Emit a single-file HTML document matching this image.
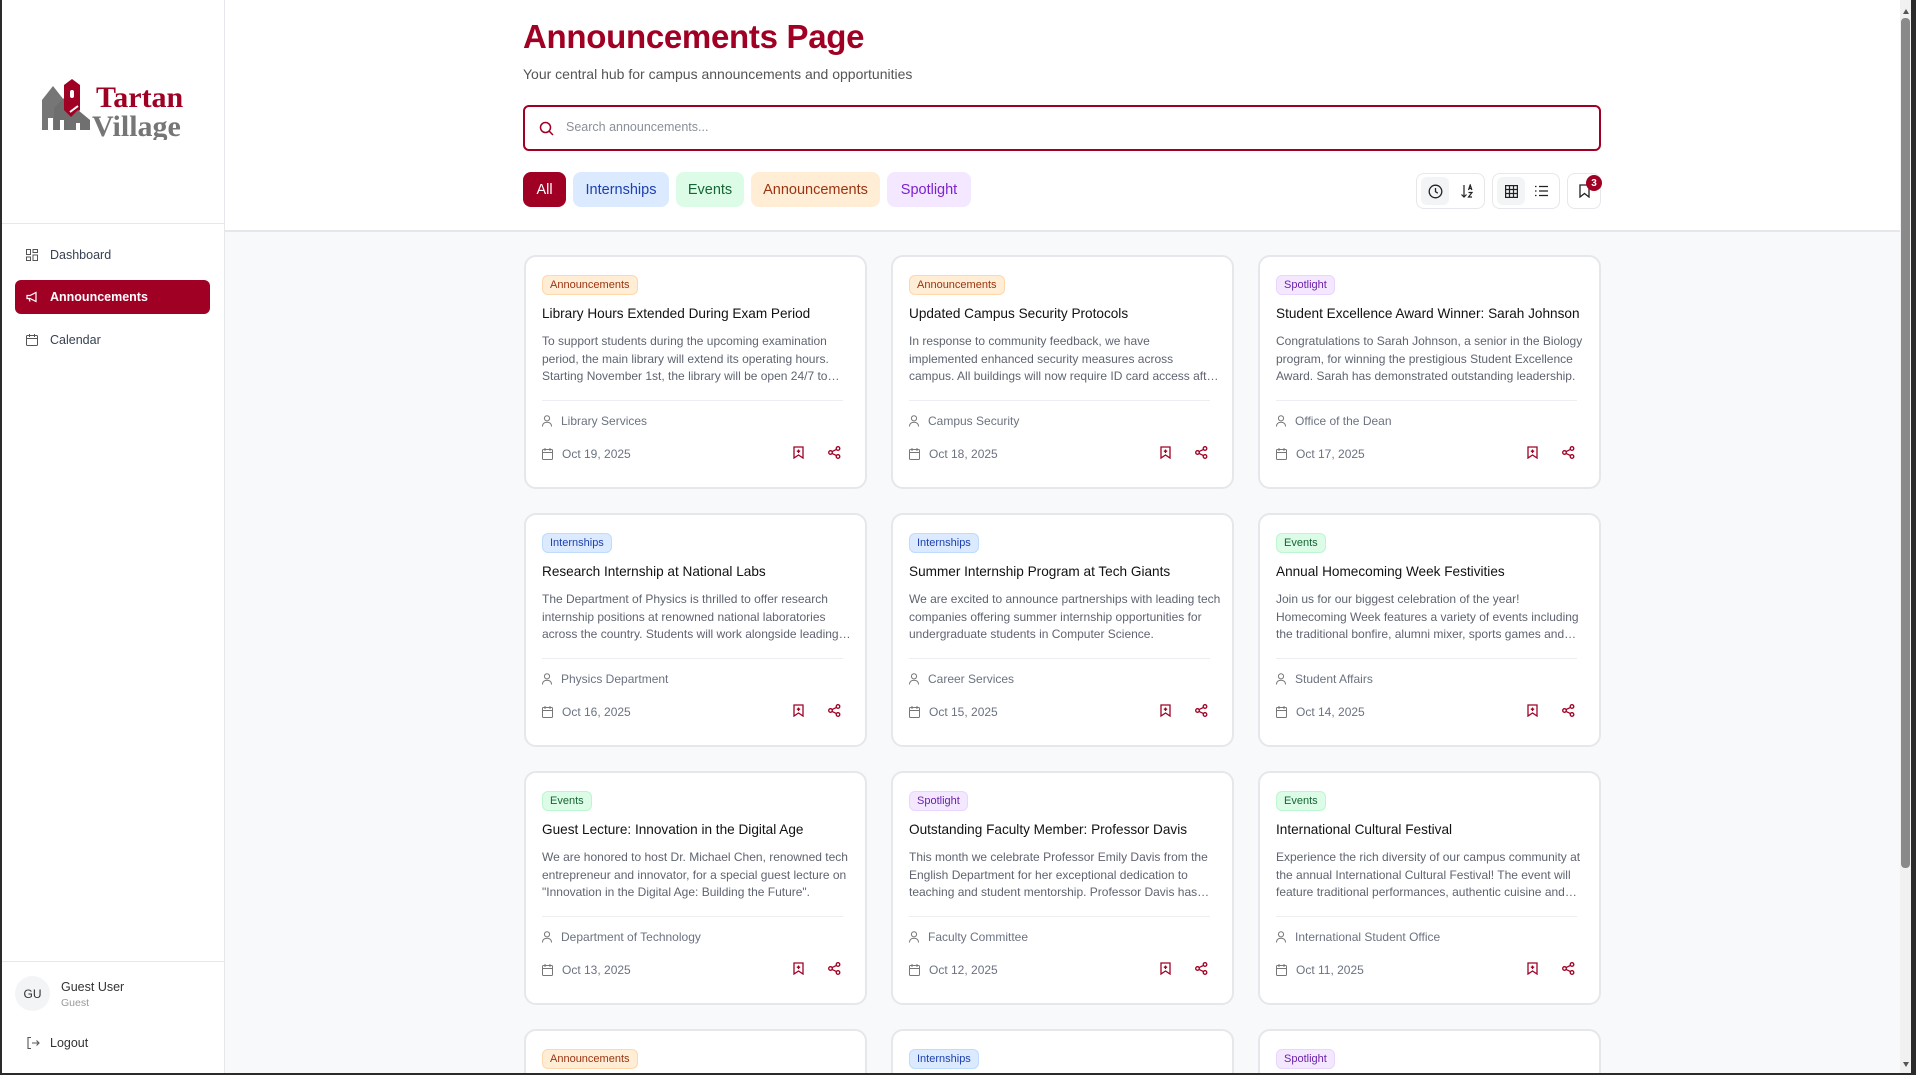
<!DOCTYPE html>
<html><head><meta charset="utf-8"><style>
*{box-sizing:border-box;margin:0;padding:0}
html,body{width:1916px;height:1075px;overflow:hidden}
body{font-family:"Liberation Sans",sans-serif;background:#f8f9fb}
#root{position:relative;width:1916px;height:1075px;overflow:hidden;background:#f8f9fb}
.sb{position:absolute;left:0;top:0;width:225px;height:1075px;background:#fff;border-right:1px solid #e5e7eb}
.main-h{position:absolute;left:225px;top:0;width:1675px;height:232px;background:#fff;border-bottom:2px solid #e5e7eb}
.nav{position:absolute;left:15px;width:195px;height:34px;border-radius:6px;font-size:12.5px;color:#374151;display:flex;align-items:center;padding-left:11px}
.nav svg{margin-right:12px}
.nav.act{background:#a00023;color:#fff;font-weight:bold}
h1{position:absolute;left:523px;top:18px;font-size:33px;font-weight:bold;color:#a00023;letter-spacing:-0.3px}
.sub{position:absolute;left:523px;top:66px;font-size:14px;color:#555}
.search{position:absolute;left:523px;top:105px;width:1078px;height:46px;border:2px solid #a00023;border-radius:6px;background:#fff}
.search span{position:absolute;left:41px;top:13px;font-size:12.5px;color:#8a8f99}
.chip{position:absolute;top:172px;height:35px;border-radius:8px;font-size:14.5px;display:flex;align-items:center;justify-content:center}
.grp{position:absolute;top:173px;height:36px;border:1px solid #e5e7eb;border-radius:8px;background:#fff}
.cards{position:absolute;left:524px;top:255px;height:818px;overflow:hidden;display:grid;grid-template-columns:repeat(3,343px);grid-auto-rows:234px;gap:24px}
.card{position:relative;background:#fff;border:2px solid #e5e7eb;border-radius:12px}
.tag{position:absolute;left:16px;top:18px;height:20px;padding:0 7px;border-radius:6px;font-size:11px;display:flex;align-items:center;border:1px solid}
.A{background:#ffedd5;color:#9a3412;border-color:#fed7aa}
.I{background:#dbeafe;color:#1e40af;border-color:#bfdbfe}
.E{background:#dcfce7;color:#166534;border-color:#bbf7d0}
.S{background:#f3e8ff;color:#6b21a8;border-color:#e9d5ff}
.t{position:absolute;left:16px;top:49px;font-size:13.6px;color:#111;white-space:nowrap}
.d{position:absolute;left:16px;top:76px;width:312px;font-size:12px;line-height:17.5px;color:#5f6470;display:-webkit-box;-webkit-line-clamp:3;-webkit-box-orient:vertical;overflow:hidden}
.hr{position:absolute;left:16px;right:22px;top:143px;border-top:1px solid #eceef1}
.m{position:absolute;left:16px;font-size:12px;color:#6b7280;display:flex;align-items:center}
.m svg{margin-right:9px}
.ic{position:absolute;top:189px}
</style></head><body><div id="root">
<div class="sb">
 <svg style="position:absolute;left:40px;top:78px" width="150" height="62" viewBox="0 0 150 62">
  <path d="M2 22 L13 8 L24 22 V52 H2Z" fill="#767676"/>
  <path d="M14 30 L24 20 L34 30 V52 H14Z" fill="#6e6e6e"/>
  <path d="M24 7 L32 1 L40 7 V32 L32 40 L24 32Z" fill="#a00023"/>
  <rect x="30" y="12" width="4" height="8" rx="2" fill="#fff"/>
  <path d="M28 42 L38 32 L50 42 V52 H28Z" fill="#707070"/>
  <path d="M30 34 L38 28" stroke="#fff" stroke-width="2"/>
  <rect x="8" y="40" width="5" height="12" fill="#fff"/><rect x="20" y="42" width="4" height="10" fill="#fff"/><rect x="36" y="45" width="4" height="7" fill="#fff"/>
  <text x="56" y="29" font-family="Liberation Serif,serif" font-weight="bold" font-size="30" fill="#a00023">Tartan</text>
  <text x="52" y="58" font-family="Liberation Serif,serif" font-weight="bold" font-size="30" fill="#767676">Village</text>
 </svg>
 <div style="position:absolute;left:0;top:223px;width:224px;border-top:1px solid #e5e7eb"></div>
 <div class="nav" style="top:238px"><svg width="12" height="12" viewBox="0 0 12 12" fill="none" stroke="#555" stroke-width="1"><rect x=".5" y=".5" width="4" height="5"/><rect x="7" y=".5" width="4.5" height="3"/><rect x="7" y="6" width="4.5" height="5.5"/><rect x=".5" y="8" width="4" height="3.5"/></svg>Dashboard</div>
 <div class="nav act" style="top:280px"><svg width="12" height="12" viewBox="0 0 12 12" fill="none" stroke="#fff" stroke-width="1.2"><path d="M1 4.5h3l6-3v9l-6-3H1z M3 7.5l1 3"/></svg>Announcements</div>
 <div class="nav" style="top:323px"><svg width="12" height="12" viewBox="0 0 12 12" fill="none" stroke="#555" stroke-width="1"><rect x=".5" y="1.5" width="11" height="10" rx="1"/><path d="M.5 4.5h11M3.5 0v3M8.5 0v3"/></svg>Calendar</div>
 <div style="position:absolute;left:0;top:961px;width:224px;border-top:1px solid #e5e7eb"></div>
 <div style="position:absolute;left:15px;top:976px;width:35px;height:35px;border-radius:50%;background:#f3f4f6;font-size:12px;color:#333;display:flex;align-items:center;justify-content:center">GU</div>
 <div style="position:absolute;left:61px;top:980px;font-size:12.5px;color:#333">Guest User</div>
 <div style="position:absolute;left:61px;top:997px;font-size:10.5px;color:#999">Guest</div>
 <svg style="position:absolute;left:27px;top:1037px" width="13" height="12" viewBox="0 0 13 12" fill="none" stroke="#555" stroke-width="1.1"><path d="M4 .5H1v11h3M5 6h7M9.5 3.5 12 6 9.5 8.5"/></svg>
 <div style="position:absolute;left:50px;top:1036px;font-size:12.5px;color:#333">Logout</div>
</div>
<div class="main-h"></div>
<h1>Announcements Page</h1>
<div class="sub">Your central hub for campus announcements and opportunities</div>
<div class="search"><svg style="position:absolute;left:14px;top:14px" width="15" height="15" viewBox="0 0 15 15" fill="none" stroke="#a00023" stroke-width="1.5"><circle cx="6.5" cy="6.5" r="5"/><path d="M10.2 10.2 14 14"/></svg><span>Search announcements...</span></div>
<div class="chip" style="left:523px;width:43px;background:#a00023;color:#fff">All</div>
<div class="chip" style="left:573px;width:96px;background:#dbeafe;color:#1e40af">Internships</div>
<div class="chip" style="left:676px;width:68px;background:#dcfce7;color:#166534">Events</div>
<div class="chip" style="left:751px;width:129px;background:#ffedd5;color:#9a3412">Announcements</div>
<div class="chip" style="left:887px;width:84px;background:#f3e8ff;color:#7e22ce">Spotlight</div>
<div class="grp" style="left:1416px;width:69px"><div style="position:absolute;left:4px;top:3px;width:28px;height:28px;background:#f3f4f6;border-radius:6px"></div>
 <svg style="position:absolute;left:11px;top:10px" width="15" height="15" viewBox="0 0 15 15" fill="none" stroke="#222" stroke-width="1.3"><circle cx="7.5" cy="7.5" r="6.3"/><path d="M7.5 4v3.7l2.3 1.5"/></svg>
 <svg style="position:absolute;left:43px;top:10px" width="14" height="14" viewBox="0 0 14 14" fill="none" stroke="#222" stroke-width="1.2"><path d="M4 1v12M1.5 10.5 4 13l2.5-2.5M8.5 6l1.7-5 1.7 5M9 4.5h2.4M8.5 8.5h3.5l-3.5 4.5h3.5"/></svg></div>
<div class="grp" style="left:1492px;width:68px"><div style="position:absolute;left:4px;top:3px;width:28px;height:28px;background:#f3f4f6;border-radius:6px"></div>
 <svg style="position:absolute;left:12px;top:11px" width="13" height="13" viewBox="0 0 13 13" fill="none" stroke="#222" stroke-width="1.2"><rect x=".6" y=".6" width="11.8" height="11.8"/><path d="M4.5 .6v12M8.5.6v12M.6 4.5h12M.6 8.5h12"/></svg>
 <svg style="position:absolute;left:42px;top:11px" width="13" height="12" viewBox="0 0 13 12" fill="none" stroke="#222" stroke-width="1.2"><path d="M4 1.5h9M4 6h9M4 10.5h9M0 1.5h1.5M0 6h1.5M0 10.5h1.5"/></svg></div>
<div class="grp" style="left:1567px;width:34px"><svg style="position:absolute;left:11px;top:10px" width="11" height="14" viewBox="0 0 11 14" fill="none" stroke="#222" stroke-width="1.3"><path d="M1 1h9v12L5.5 9.5 1 13z"/></svg></div>
<div style="position:absolute;left:1586px;top:175px;width:16px;height:16px;border-radius:50%;background:#a00023;color:#fff;font-size:10px;font-weight:bold;display:flex;align-items:center;justify-content:center">3</div>

<div class="cards" id="cards"></div>

<div style="position:absolute;left:1900px;top:0;width:12px;height:1075px;background:#f1f1f1"></div>
<div style="position:absolute;left:1901px;top:18px;width:9px;height:850px;background:#8a8a8a;border-radius:4px"></div>
<div style="position:absolute;left:1903px;top:6px;width:0;height:0;border:3px solid transparent;border-bottom:5px solid #555"></div>
<div style="position:absolute;left:1903px;top:1062px;width:0;height:0;border:3px solid transparent;border-top:5px solid #555"></div>
<div style="position:absolute;left:1911px;top:0;width:5px;height:1075px;background:#2b2b2b"></div>
<div style="position:absolute;left:0;top:0;width:2px;height:1075px;background:#2b2b2b"></div>
<div style="position:absolute;left:0;top:1073px;width:1916px;height:2px;background:#2b2b2b"></div>
</div>
<script>
var D=[
["A","Announcements","Library Hours Extended During Exam Period","To support students during the upcoming examination period, the main library will extend its operating hours. Starting November 1st, the library will be open 24/7 to accommodate study needs.","Library Services","Oct 19, 2025"],
["A","Announcements","Updated Campus Security Protocols","In response to community feedback, we have implemented enhanced security measures across campus. All buildings will now require ID card access after hours.","Campus Security","Oct 18, 2025"],
["S","Spotlight","Student Excellence Award Winner: Sarah Johnson","Congratulations to Sarah Johnson, a senior in the Biology program, for winning the prestigious Student Excellence Award. Sarah has demonstrated outstanding leadership.","Office of the Dean","Oct 17, 2025"],
["I","Internships","Research Internship at National Labs","The Department of Physics is thrilled to offer research internship positions at renowned national laboratories across the country. Students will work alongside leading scientists.","Physics Department","Oct 16, 2025"],
["I","Internships","Summer Internship Program at Tech Giants","We are excited to announce partnerships with leading tech companies offering summer internship opportunities for undergraduate students in Computer Science.","Career Services","Oct 15, 2025"],
["E","Events","Annual Homecoming Week Festivities","Join us for our biggest celebration of the year! Homecoming Week features a variety of events including the traditional bonfire, alumni mixer, sports games and more.","Student Affairs","Oct 14, 2025"],
["E","Events","Guest Lecture: Innovation in the Digital Age","We are honored to host Dr. Michael Chen, renowned tech entrepreneur and innovator, for a special guest lecture on \"Innovation in the Digital Age: Building the Future\".","Department of Technology","Oct 13, 2025"],
["S","Spotlight","Outstanding Faculty Member: Professor Davis","This month we celebrate Professor Emily Davis from the English Department for her exceptional dedication to teaching and student mentorship. Professor Davis has inspired many.","Faculty Committee","Oct 12, 2025"],
["E","Events","International Cultural Festival","Experience the rich diversity of our campus community at the annual International Cultural Festival! The event will feature traditional performances, authentic cuisine and more.","International Student Office","Oct 11, 2025"],
["A","Announcements","","","",""],["I","Internships","","","",""],["S","Spotlight","","","",""]];
var user='<svg width="10" height="12" viewBox="0 0 10 12" fill="none" stroke="#777" stroke-width="1"><circle cx="5" cy="3.3" r="2.6"/><path d="M.5 11.5c0-3 2-4.3 4.5-4.3s4.5 1.3 4.5 4.3"/></svg>';
var cal='<svg width="11" height="12" viewBox="0 0 11 12" fill="none" stroke="#777" stroke-width="1"><rect x=".5" y="1.5" width="10" height="10" rx="1"/><path d="M.5 4.5h10M3 0v3M8 0v3"/></svg>';
var bm='<svg width="11" height="13" viewBox="0 0 11 13" fill="none" stroke="#a00023" stroke-width="1.3"><path d="M1 1h9v11L5.5 9 1 12z M5.5 3.5v3.5M3.8 5.2h3.4"/></svg>';
var sh='<svg width="13" height="13" viewBox="0 0 13 13" fill="none" stroke="#a00023" stroke-width="1.3"><circle cx="10" cy="2.5" r="1.8"/><circle cx="2.5" cy="6.5" r="1.8"/><circle cx="10" cy="10.5" r="1.8"/><path d="M4 5.6 8.5 3.4M4 7.4l4.5 2.2"/></svg>';
var h='';D.forEach(function(c){h+='<div class="card"><div class="tag '+c[0]+'">'+c[1]+'</div>';
if(c[2])h+='<div class="t">'+c[2]+'</div><div class="d">'+c[3]+'</div><div class="hr"></div><div class="m" style="top:157px">'+user+c[4]+'</div><div class="m" style="top:190px">'+cal+c[5]+'</div><div class="ic" style="left:267px">'+bm+'</div><div class="ic" style="left:302px">'+sh+'</div>';
h+='</div>'});document.getElementById('cards').innerHTML=h;
</script>
</body></html>
